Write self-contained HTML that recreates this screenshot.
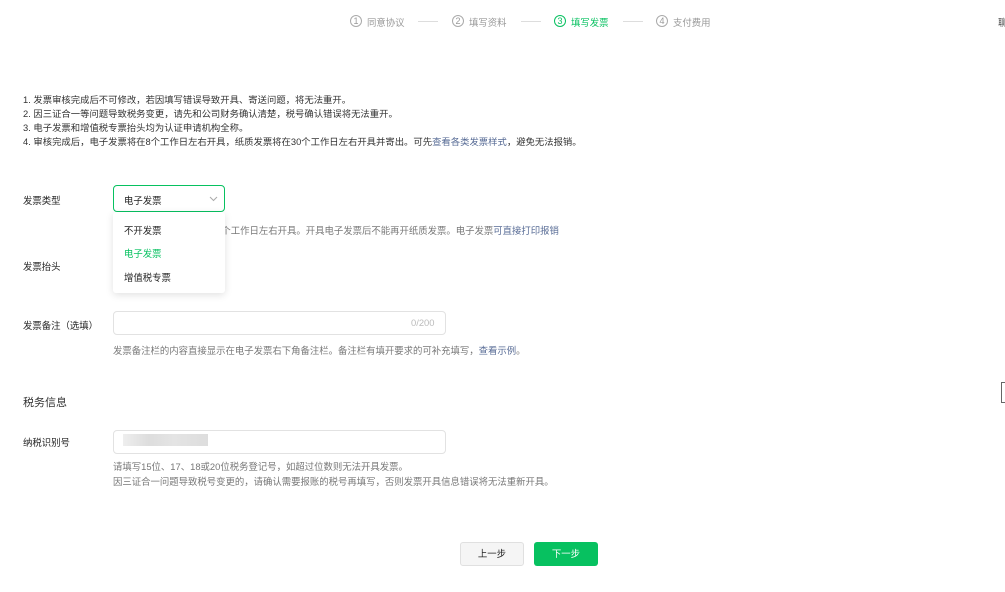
<!DOCTYPE html>
<html><head><meta charset="utf-8"><style>
*{margin:0;padding:0;box-sizing:border-box}
body{width:1005px;height:592px;background:#fff;font-family:"Liberation Sans","Noto Sans CJK SC",sans-serif;font-size:9.4px;color:#222;position:relative;overflow:hidden}
.a{position:absolute;white-space:nowrap}
.c{position:absolute;width:12px;height:12px;border:1px solid #aaa;border-radius:50%;font-size:9px;line-height:10px;text-align:center;color:#999}
.st{color:#999;font-size:9.4px}
.ln{position:absolute;height:1px;background:#ddd;width:20px;top:21px}
.g{color:#777}
.in{position:absolute;border:1px solid #e2e2e2;border-radius:4px;background:#fff}
</style></head><body>
<div class="c" style="left:350px;top:15px">1</div><div class="a st" style="left:367px;top:15px">同意协议</div>
<div class="ln" style="left:418px"></div>
<div class="c" style="left:452px;top:15px">2</div><div class="a st" style="left:469px;top:15px">填写资料</div>
<div class="ln" style="left:521px"></div>
<div class="c" style="left:554px;top:15px;border-color:#07c160;color:#07c160">3</div><div class="a st" style="left:571px;top:15px;color:#07c160">填写发票</div>
<div class="ln" style="left:623px"></div>
<div class="c" style="left:656px;top:15px">4</div><div class="a st" style="left:673px;top:15px">支付费用</div>
<div class="a" style="left:998px;top:15px;color:#555">聊</div>

<div class="a" style="left:23px;top:93px;line-height:14px;font-size:9.35px;color:#333">1. 发票审核完成后不可修改，若因填写错误导致开具、寄送问题，将无法重开。<br>2. 因三证合一等问题导致税务变更，请先和公司财务确认清楚，税号确认错误将无法重开。<br>3. 电子发票和增值税专票抬头均为认证申请机构全称。<br>4. 审核完成后，电子发票将在8个工作日左右开具，纸质发票将在30个工作日左右开具并寄出。可先<span style="color:#576b95">查看各类发票样式</span>，避免无法报销。</div>

<div class="a" style="left:23px;top:193px">发票类型</div>
<div class="in" style="left:113px;top:185px;width:112px;height:27px;border-color:#07c160"></div>
<div class="a" style="left:124px;top:193px">电子发票</div>
<svg class="a" style="left:209px;top:196px" width="9" height="6"><path d="M1 1L4.5 4.5L8 1" stroke="#aaa" fill="none"/></svg>
<div class="a g" style="left:113px;top:223px">电子发票将于审核完成后8个工作日左右开具。开具电子发票后不能再开纸质发票。电子发票<span style="color:#576b95">可直接打印报销</span></div>
<div class="a" style="left:23px;top:259px">发票抬头</div>
<div class="a g" style="left:113px;top:278px">抬头为认证申请机构全称</div>
<div class="a" style="left:113px;top:212px;width:112px;height:81px;background:#fff;box-shadow:0 2px 8px rgba(0,0,0,.12);border-radius:3px"></div>
<div class="a" style="left:124px;top:223px">不开发票</div>
<div class="a" style="left:124px;top:246px;color:#07c160">电子发票</div>
<div class="a" style="left:124px;top:270px">增值税专票</div>

<div class="a" style="left:23px;top:318px">发票备注（选填）</div>
<div class="in" style="left:113px;top:311px;width:333px;height:24px"></div>
<div class="a" style="left:411px;top:317px;color:#bbb">0/200</div>
<div class="a g" style="left:113px;top:343px">发票备注栏的内容直接显示在电子发票右下角备注栏。备注栏有填开要求的可补充填写，<span style="color:#576b95">查看示例</span>。</div>

<div class="a" style="left:23px;top:394px;font-size:11px;color:#333">税务信息</div>
<div class="a" style="left:23px;top:435px">纳税识别号</div>
<div class="in" style="left:113px;top:430px;width:333px;height:24px"></div>
<div class="a" style="left:123px;top:434px;width:85px;height:12px;background:linear-gradient(90deg,#eee,#ddd 30%,#e4e4e4 60%,#ddd)"></div>
<div class="a g" style="left:113px;top:459px;line-height:15px">请填写15位、17、18或20位税务登记号，如超过位数则无法开具发票。<br>因三证合一问题导致税号变更的，请确认需要报账的税号再填写，否则发票开具信息错误将无法重新开具。</div>

<div class="a" style="left:460px;top:542px;width:64px;height:24px;border:1px solid #e0e0e0;background:#f5f5f5;border-radius:3px;text-align:center;line-height:22px">上一步</div>
<div class="a" style="left:534px;top:542px;width:64px;height:24px;background:#07c160;color:#fff;border-radius:3px;text-align:center;line-height:24px">下一步</div>
<div class="a" style="left:1001px;top:382px;width:6px;height:21px;border:1px solid #666"></div>
</body></html>
